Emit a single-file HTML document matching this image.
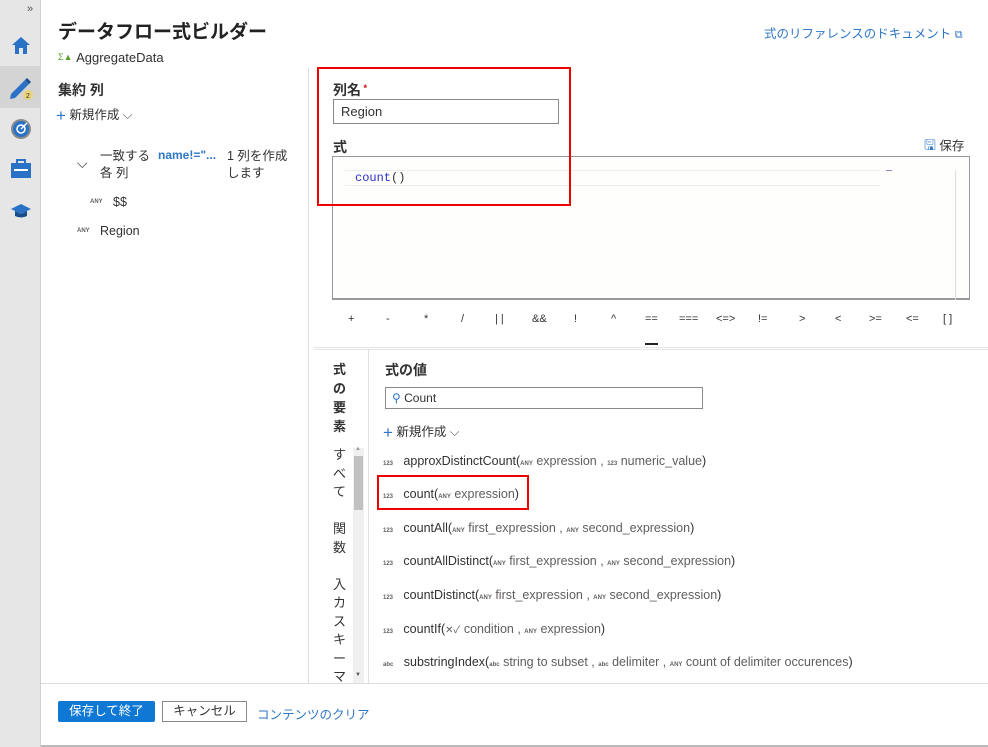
<!DOCTYPE html>
<html><head><meta charset="utf-8"><style>
*{margin:0;padding:0;box-sizing:border-box}
body{width:988px;height:747px;overflow:hidden;background:#fff;font-family:"Liberation Sans","Noto Sans CJK JP",sans-serif;color:#323130;position:relative;font-size:12px}
.a{position:absolute;white-space:nowrap}
.side{left:0;top:0;width:41px;height:747px;background:#e6e6e6;border-right:1px solid #d0d0d0}
.t{font-size:6px;color:#605e5c;font-weight:bold}
.fn{font-size:12.5px;color:#323130}
.g{color:#605e5c}
.v{font-size:13px;left:333px}
</style></head><body>
<div class="a side"></div>
<div class="a" style="left:27px;top:3px;font-size:11px;color:#555">»</div>
<svg class="a" style="left:10px;top:34px" width="22" height="22" viewBox="0 0 22 22"><path d="M2 11 L11 3 L20 11 H17 V20 H13 V14 H9 V20 H5 V11Z" fill="#2a72c6"/></svg>
<div class="a" style="left:0;top:66px;width:41px;height:42px;background:#d4d4d4"></div>
<svg class="a" style="left:8px;top:74px" width="26" height="26" viewBox="0 0 26 26"><path d="M3 20 L17 6 L21 10 L7 24 L2 25Z" fill="#2a72c6"/><path d="M17 6 L19 4 L23 8 L21 10Z" fill="#1b4f8c"/><circle cx="20" cy="21" r="5" fill="#e8d27a"/><text x="18" y="24" font-size="7" fill="#333">2</text></svg>
<svg class="a" style="left:10px;top:118px" width="22" height="22"><circle cx="11" cy="11" r="10" fill="#8a8a8a"/><circle cx="11" cy="11" r="8" fill="#2a72c6"/><circle cx="11" cy="11" r="4" fill="none" stroke="#fff" stroke-width="1.5"/><path d="M11 11 L17 5" stroke="#fff" stroke-width="1.5"/></svg>
<svg class="a" style="left:10px;top:158px" width="22" height="22"><rect x="1" y="5" width="20" height="15" fill="#2a72c6"/><rect x="7" y="2" width="8" height="4" fill="none" stroke="#2a72c6" stroke-width="2"/><rect x="4" y="11" width="14" height="2" fill="#fff"/></svg>
<svg class="a" style="left:10px;top:202px" width="22" height="18"><path d="M1 7 L11 2 L21 7 L11 12Z" fill="#2a72c6"/><path d="M5 9 V14 Q11 17 17 14 V9 L11 12Z" fill="#1b4f8c"/></svg>

<div class="a" style="left:58px;top:17px;font-size:19px;font-weight:bold;color:#222">データフロー式ビルダー</div>
<div class="a" style="left:58px;top:50px;font-size:13px"><span style="color:#5a9e2f;font-size:9px;vertical-align:2px">Σ▲</span> AggregateData</div>
<div class="a" style="left:764px;top:23px;font-size:12.5px;color:#2f76c6">式のリファレンスのドキュメント <span style="font-size:11px">⧉</span></div>

<div class="a" style="left:58px;top:80px;font-size:14px;font-weight:bold">集約 列</div>
<div class="a" style="left:56px;top:104px;font-size:12.5px"><span style="color:#2f76c6;font-size:17px;vertical-align:-2px">+</span> 新規作成 <span style="color:#555">⌵</span></div>
<div class="a" style="left:77px;top:155px;font-size:14px;color:#333">⌵</div>
<div class="a" style="left:100px;top:148px;font-size:12.5px;line-height:17px">一致する<br>各 列</div>
<div class="a" style="left:158px;top:148px;font-size:12px;font-weight:bold;color:#2f76c6">name!="...</div>
<div class="a" style="left:227px;top:148px;font-size:12.5px;line-height:17px">1 列を作成<br>します</div>
<div class="a t" style="left:90px;top:199px">ANY</div><div class="a" style="left:113px;top:195px;font-size:12.5px">$$</div>
<div class="a t" style="left:77px;top:228px">ANY</div><div class="a" style="left:100px;top:224px;font-size:12.5px">Region</div>

<div class="a" style="left:308px;top:68px;width:1px;height:615px;background:#ddd"></div>

<div class="a" style="left:333px;top:80px;font-size:14px;font-weight:bold">列名<span style="color:#c00;font-size:9px;vertical-align:4px"> *</span></div>
<div class="a" style="left:333px;top:99px;width:226px;height:25px;border:1px solid #8a8886;padding:4px 7px;font-size:13px">Region</div>
<div class="a" style="left:333px;top:137px;font-size:14px;font-weight:bold">式</div>
<div class="a" style="left:924px;top:135px;font-size:12.5px"><span style="color:#2f76c6;font-size:14px">🖫</span> 保存</div>
<div class="a" style="left:332px;top:156px;width:638px;height:144px;border:1px solid #999;border-bottom-width:2px;background:#fefefc"></div>
<div class="a" style="left:955px;top:170px;width:1px;height:130px;background:#ddd"></div>
<div class="a" style="left:345px;top:170px;width:535px;height:16px;border-top:1px solid #eee;border-bottom:1px solid #eee"></div>
<div class="a" style="left:886px;top:170px;width:6px;height:1px;background:#8a8ad8"></div>
<div class="a" style="left:355px;top:171px;font-family:'Liberation Mono',monospace;font-size:12px;color:#2d2dd0">count<span style="color:#333">()</span></div>
<div class="a" style="left:317px;top:67px;width:254px;height:139px;border:2px solid #e00"></div>

<div class="a" style="left:348px;top:313px;font-size:11px;width:620px">
<span class="a" style="left:0">+</span><span class="a" style="left:38px">-</span><span class="a" style="left:76px">*</span><span class="a" style="left:113px">/</span><span class="a" style="left:147px">| |</span><span class="a" style="left:184px">&amp;&amp;</span><span class="a" style="left:226px">!</span><span class="a" style="left:263px">^</span><span class="a" style="left:297px">==</span><span class="a" style="left:331px">===</span><span class="a" style="left:368px">&lt;=&gt;</span><span class="a" style="left:410px">!=</span><span class="a" style="left:451px">&gt;</span><span class="a" style="left:487px">&lt;</span><span class="a" style="left:521px">&gt;=</span><span class="a" style="left:558px">&lt;=</span><span class="a" style="left:595px">[ ]</span></div>
<div class="a" style="left:645px;top:343px;width:13px;height:2px;background:#222"></div>
<div class="a" style="left:314px;top:347px;width:674px;height:3px;border-top:1px solid #e5e5e5;border-bottom:1px solid #e5e5e5"></div>
<div class="a" style="left:368px;top:350px;width:1px;height:333px;background:#e0e0e0"></div>

<div class="a v" style="top:360px;font-weight:bold;line-height:19px;white-space:normal;width:16px">式<br>の<br>要<br>素</div>
<div class="a" style="left:325px;top:446px;width:28px;height:237px;overflow:hidden">
<div class="a" style="left:8px;top:0;font-size:13px;line-height:18.5px;white-space:normal;width:16px">す<br>べ<br>て<br><br>関<br>数<br><br>入<br>カ<br>ス<br>キ<br>ー<br>マ<br>パ</div></div>
<div class="a" style="left:353px;top:448px;width:11px;height:235px;background:#f0f0f0"></div>
<div class="a" style="left:354px;top:456px;width:9px;height:54px;background:#c1c1c1"></div>
<div class="a" style="left:355px;top:446px;font-size:6px;color:#999">▲</div>
<div class="a" style="left:355px;top:672px;font-size:6px;color:#555">▼</div>

<div class="a" style="left:385px;top:360px;font-size:14px;font-weight:bold">式の値</div>
<div class="a" style="left:385px;top:387px;width:318px;height:22px;border:1px solid #8a8886;padding:3px 6px;font-size:12px"><span style="color:#2f76c6">⚲</span> Count</div>
<div class="a" style="left:383px;top:421px;font-size:12.5px"><span style="color:#2f76c6;font-size:17px;vertical-align:-2px">+</span> 新規作成 <span style="color:#555">⌵</span></div>

<div class="a fn" style="left:383px;top:454px"><span class="t">123</span>&nbsp;&nbsp;&nbsp;approxDistinctCount(<span class="t">ANY</span> <span class="g">expression , </span><span class="t">123</span> <span class="g">numeric_value</span>)</div>
<div class="a fn" style="left:383px;top:487px"><span class="t">123</span>&nbsp;&nbsp;&nbsp;count(<span class="t">ANY</span> <span class="g">expression</span>)</div>
<div class="a" style="left:377px;top:475px;width:152px;height:35px;border:2px solid #e00"></div>
<div class="a fn" style="left:383px;top:521px"><span class="t">123</span>&nbsp;&nbsp;&nbsp;countAll(<span class="t">ANY</span> <span class="g">first_expression , </span><span class="t">ANY</span> <span class="g">second_expression</span>)</div>
<div class="a fn" style="left:383px;top:554px"><span class="t">123</span>&nbsp;&nbsp;&nbsp;countAllDistinct(<span class="t">ANY</span> <span class="g">first_expression , </span><span class="t">ANY</span> <span class="g">second_expression</span>)</div>
<div class="a fn" style="left:383px;top:588px"><span class="t">123</span>&nbsp;&nbsp;&nbsp;countDistinct(<span class="t">ANY</span> <span class="g">first_expression , </span><span class="t">ANY</span> <span class="g">second_expression</span>)</div>
<div class="a fn" style="left:383px;top:621px"><span class="t">123</span>&nbsp;&nbsp;&nbsp;countIf(<span class="g" style="font-size:10px">✕✓</span> <span class="g">condition , </span><span class="t">ANY</span> <span class="g">expression</span>)</div>
<div class="a fn" style="left:383px;top:655px"><span class="t">abc</span>&nbsp;&nbsp;&nbsp;substringIndex(<span class="t">abc</span> <span class="g">string to subset , </span><span class="t">abc</span> <span class="g">delimiter , </span><span class="t">ANY</span> <span class="g">count of delimiter occurences</span>)</div>

<div class="a" style="left:41px;top:683px;width:947px;height:1px;background:#ddd"></div>
<div class="a" style="left:58px;top:701px;width:97px;height:21px;background:#0f78d4;color:#fff;font-size:12.5px;text-align:center;line-height:21px;border-radius:2px">保存して終了</div>
<div class="a" style="left:162px;top:701px;width:85px;height:21px;border:1px solid #8a8886;font-size:12.5px;text-align:center;line-height:19px">キャンセル</div>
<div class="a" style="left:257px;top:704px;font-size:12.5px;color:#2f76c6">コンテンツのクリア</div>
<div class="a" style="left:41px;top:745px;width:947px;height:2px;background:#bbb"></div>
</body></html>
